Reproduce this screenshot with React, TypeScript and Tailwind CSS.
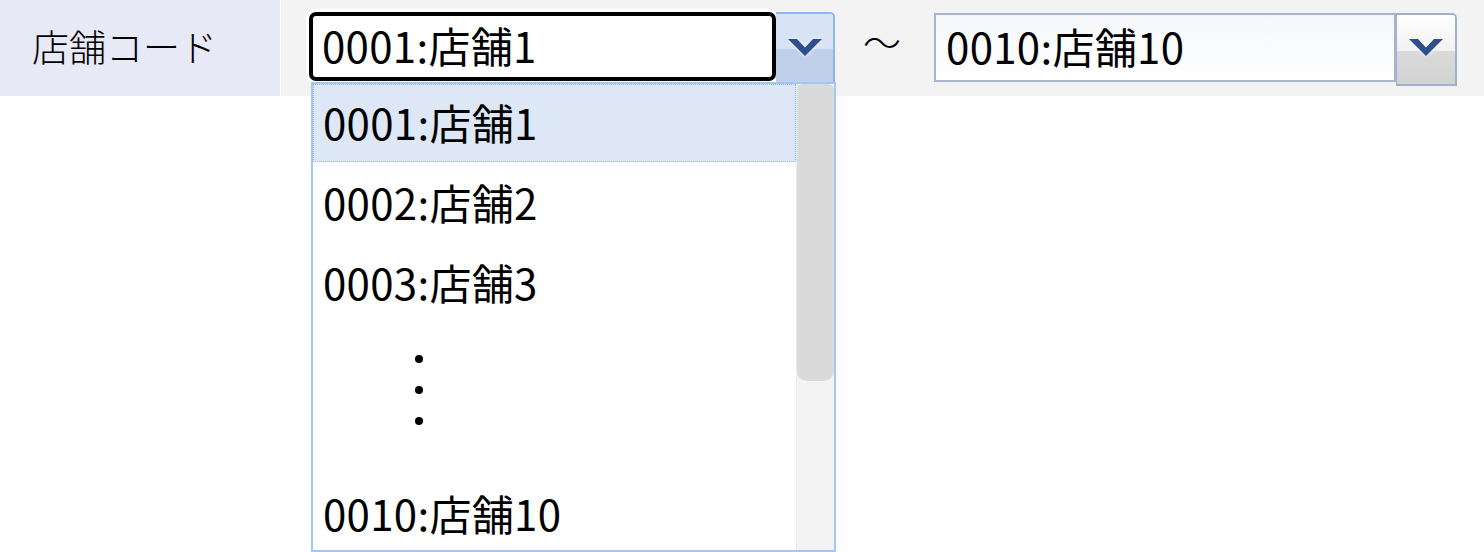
import React from "react";

const jp = { fontFamily: '"Noto Sans CJK JP", "Noto Sans", sans-serif' };

function Chevron({ color = "#2d4f8c" }: { color?: string }) {
  return (
    <svg width="34" height="17" viewBox="0 0 34 17" className="drop-shadow-[0_0_2px_rgba(255,255,255,0.9)]">
      <polygon points="0,0 9,0 17,8.5 25,0 34,0 17,17" fill={color} />
    </svg>
  );
}

export default function App() {
  return (
    <div className="relative w-[1484px] h-[552px] bg-white overflow-hidden" style={jp}>
      {/* top bar */}
      <div className="flex h-[96px]">
        <div className="w-[280px] bg-[#e7e9f6] flex items-center pl-[32px] pb-[2px] text-[37px] font-light text-black">
          店舗コード
        </div>
        <div className="w-px bg-white" />
        <div className="flex-1 bg-[#f3f3f3] flex items-start">
          {/* first combo */}
          <div className="ml-[28px] mt-[12px] flex">
            <div className="w-[467px] h-[69px] rounded-[7px] border-[4px] border-black bg-white shadow-[0_0_0_3px_#ffffff] flex items-center pl-[9px] pb-[3px] text-[42px] tracking-[0.3px] text-black leading-none">
              0001:店舗1
            </div>
            <div className="w-[59px] h-[70px] rounded-tr-[5px] border-t-2 border-r-2 border-[#8db6ec] flex flex-col relative overflow-hidden">
              <div className="h-[35px] bg-[#d7e3f4]" />
              <div className="flex-1 bg-[#bed0ea]" />
              <div className="absolute inset-0 flex items-center justify-center pb-[2px]">
                <Chevron />
              </div>
            </div>
          </div>
          {/* tilde */}
          <div className="ml-[28px] mt-[22px] text-[38px] font-light text-black leading-none">～</div>
          {/* second combo */}
          <div className="ml-[33px] mt-[13px] flex">
            <div className="w-[462px] h-[69px] border-2 border-[#a9b5cd] bg-gradient-to-b from-[#f5f7fa] to-white flex items-center pl-[10px] pb-[3px] text-[42px] tracking-[0.3px] text-black leading-none">
              0010:店舗10
            </div>
            <div className="w-[61px] h-[73px] rounded-tr-[5px] border-t-2 border-r-2 border-b-2 border-l border-[#a3afc8] flex flex-col relative overflow-hidden">
              <div className="h-[36px] bg-gradient-to-b from-white to-[#f1f1f1]" />
              <div className="flex-1 bg-gradient-to-b from-[#dadada] to-[#d2d2d2]" />
              <div className="absolute inset-0 flex items-center justify-center pb-[4px]">
                <Chevron />
              </div>
            </div>
          </div>
        </div>
      </div>

      {/* dropdown list (overlay) */}
      <div className="absolute left-[311px] top-[82px] w-[525px] h-[470px] border-2 border-[#a3c6f3] bg-white flex text-[42px] tracking-[0.3px] text-black leading-none">
        <div className="flex-1 flex flex-col">
          <div className="h-[78px] bg-[#dde7f5] border border-dotted border-[#8cb6f5] flex items-center pl-[9px] pb-[2px]">
            0001:店舗1
          </div>
          <div className="h-[80px] flex items-center pl-[10px] pb-[1px]">0002:店舗2</div>
          <div className="h-[80px] flex items-center pl-[10px] pb-[1px]">0003:店舗3</div>
          <div className="h-[130px] flex flex-col items-start pl-[102px] pt-[33px] gap-[23px]">
            <div className="w-[8px] h-[8px] rounded-full bg-black" />
            <div className="w-[8px] h-[8px] rounded-full bg-black" />
            <div className="w-[8px] h-[8px] rounded-full bg-black" />
          </div>
          <div className="flex-1 flex items-center pl-[10px] pt-[24px]">0010:店舗10</div>
        </div>
        <div className="w-[38px] h-full bg-[#f3f3f3] border-l border-[#ebebeb] flex flex-col">
          <div className="h-[297px] bg-[#dadada] rounded-t-[6px] rounded-b-[10px]" />
        </div>
      </div>
    </div>
  );
}
